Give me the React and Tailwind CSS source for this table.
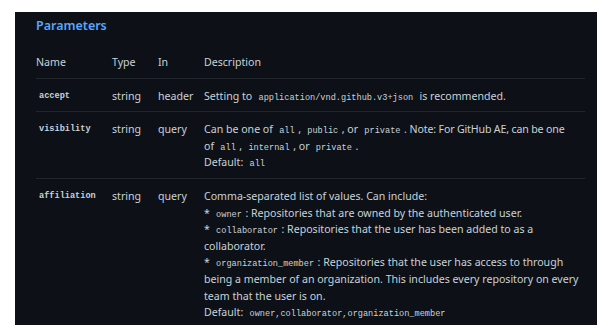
const params = [
  {
    name: 'accept',
    type: 'string',
    in: 'header',
    desc: (
      <>
        Setting to <Code>application/vnd.github.v3+json</Code> is recommended.
      </>
    ),
  },
  {
    name: 'visibility',
    type: 'string',
    in: 'query',
    desc: (
      <>
        Can be one of <Code>all</Code>, <Code>public</Code>, or <Code>private</Code>.{' '}
        <span className="tracking-[-0.15px]">Note: For GitHub AE, can be one</span>
        <br />
        of <Code>all</Code>, <Code>internal</Code>, or <Code>private</Code>.
        <br />
        Default: <Code>all</Code>
      </>
    ),
  },
  {
    name: 'affiliation',
    type: 'string',
    in: 'query',
    last: true,
    desc: (
      <>
        Comma-separated list of values. Can include:
        <br />* <Code>owner</Code>: Repositories that are owned by the authenticated user.
        <br />* <Code>collaborator</Code>: Repositories that the user has been added to as a
        <br />
        collaborator.
        <br />* <Code>organization_member</Code>: Repositories that the user has access to through
        <br />
        being a member of an organization. This includes every repository on every
        <br />
        team that the user is on.
        <br />
        Default: <Code>owner,collaborator,organization_member</Code>
      </>
    ),
  },
]

function Code({ children }) {
  return (
    <code className="px-[3.5px] font-['Liberation_Mono',monospace] text-[8.6px] leading-none text-[#c9d1d9]">
      {children}
    </code>
  )
}

export default function App() {
  return (
    <div className="h-[336px] w-[613px] bg-white pt-[12px] pl-[15px]">
      <div className="h-[313px] w-[582px] overflow-hidden bg-[#0d1117] pl-[21px] pr-[12px] font-['Noto_Sans',sans-serif] text-[10.6px] leading-[16.6px] text-[#c9d1d9]">
        {/* Title */}
        <h3 className="pt-[6px] text-[12.5px] font-semibold leading-[16px] text-[#58a6ff]">Parameters</h3>

        {/* Header */}
        <div className="mt-[20px] grid grid-cols-[76px_46px_46px_1fr] border-b border-[#21262d] pb-[7px]">
          <div>Name</div>
          <div>Type</div>
          <div>In</div>
          <div>Description</div>
        </div>

        {/* Rows */}
        {params.map((p) => (
          <div
            key={p.name}
            className={`grid grid-cols-[76px_46px_46px_1fr] border-b pt-[9px] ${p.last ? 'border-[#30363d] pb-[4px]' : 'border-[#21262d] pb-[7px]'}`}
          >
            <div className="pl-[3px] font-['Liberation_Mono',monospace] text-[8.6px] font-bold">{p.name}</div>
            <div>{p.type}</div>
            <div>{p.in}</div>
            <div className="whitespace-nowrap">{p.desc}</div>
          </div>
        ))}
      </div>
    </div>
  )
}
